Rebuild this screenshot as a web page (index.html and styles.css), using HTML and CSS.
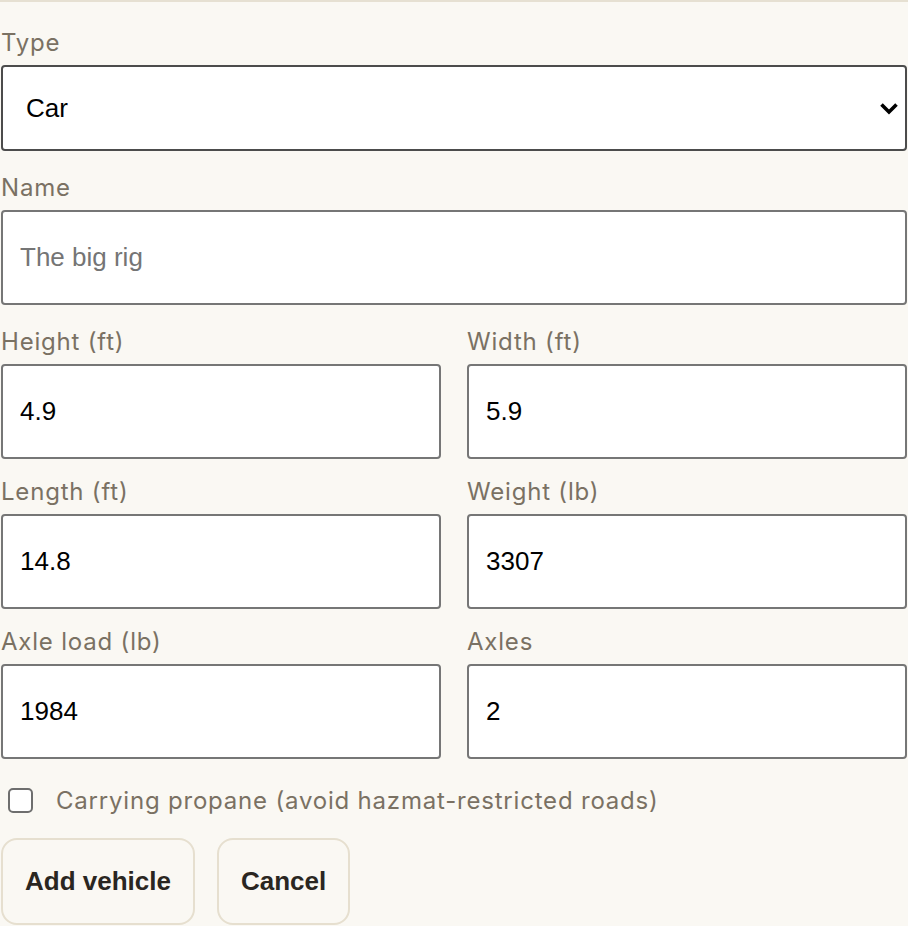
FILE: index.html
```html
<!DOCTYPE html>
<html lang="en">
<head>
    <meta charset="UTF-8">
    <title>Add vehicle</title>
    <link rel="stylesheet" href="styles.css">
</head>
<body>
    <form class="vehicle-form" id="vehicleForm">
        <div class="field">
            <label for="type">Type</label>
            <div class="select-wrap">
                <select id="type">
                    <option>Car</option>
                    <option>Truck</option>
                    <option>Van</option>
                    <option>RV</option>
                </select>
                <svg class="chevron" width="20" height="13" viewBox="0 0 20 13">
                    <path d="M2.5 2.5 L10 10 L17.5 2.5" fill="none" stroke="#000" stroke-width="3.6"/>
                </svg>
            </div>
        </div>
        <div class="field">
            <label for="name">Name</label>
            <input type="text" id="name" placeholder="The big rig">
        </div>
        <div class="dims">
            <div class="field">
                <label for="height">Height (ft)</label>
                <input type="text" id="height" value="4.9">
            </div>
            <div class="field">
                <label for="width">Width (ft)</label>
                <input type="text" id="width" value="5.9">
            </div>
            <div class="field">
                <label for="length">Length (ft)</label>
                <input type="text" id="length" value="14.8">
            </div>
            <div class="field">
                <label for="weight">Weight (lb)</label>
                <input type="text" id="weight" value="3307">
            </div>
            <div class="field">
                <label for="axleload">Axle load (lb)</label>
                <input type="text" id="axleload" value="1984">
            </div>
            <div class="field">
                <label for="axles">Axles</label>
                <input type="text" id="axles" value="2">
            </div>
        </div>
        <label class="check">
            <input type="checkbox" id="propane">
            <span>Carrying propane (avoid hazmat-restricted roads)</span>
        </label>
        <div class="actions">
            <button type="submit">Add vehicle</button>
            <button type="button">Cancel</button>
        </div>
    </form>
</body>
</html>
```

FILE: styles.css
```css
body {
    margin: 0;
    padding: 0;
    background-color: #faf8f3;
    font-family: Inter, "Noto Sans", sans-serif;
}
.vehicle-form {
    border-top: 2px solid #e6e0d2;
    padding: 26px 1px 0 1px;
    display: flex;
    flex-direction: column;
    gap: 22px;
}
.field {
    display: flex;
    flex-direction: column;
    gap: 7px;
    min-width: 0;
}
.field label {
    font-size: 24px;
    line-height: 30px;
    letter-spacing: 0.8px;
    color: #7a7163;
}
.dims {
    display: grid;
    grid-template-columns: 1fr 1fr;
    column-gap: 26px;
    row-gap: 18px;
}
input[type="text"], select {
    box-sizing: border-box;
    width: 100%;
    height: 95px;
    padding: 0 17px;
    border: 2px solid #767676;
    border-radius: 4px;
    background-color: #fff;
    font-family: "Liberation Sans", Arial, sans-serif;
    font-size: 26px;
    color: #000;
}
input::placeholder {
    color: #757575;
}
.select-wrap {
    position: relative;
}
select {
    height: 86px;
    padding: 0 23px;
    border-color: #4c4c4c;
    appearance: none;
    -webkit-appearance: none;
}
.chevron {
    position: absolute;
    right: 8px;
    top: 37px;
    pointer-events: none;
}
.check {
    display: flex;
    align-items: center;
    gap: 23px;
    height: 30px;
    padding-left: 7px;
    margin-top: 4px;
    font-size: 24px;
    letter-spacing: 0.8px;
    color: #7a7163;
}
.check input {
    flex: none;
    width: 25px;
    height: 25px;
    margin: 0;
    appearance: none;
    -webkit-appearance: none;
    border: 2px solid #6e6e6e;
    border-radius: 5px;
    background-color: #fff;
}
.actions {
    display: flex;
    gap: 22px;
    margin-top: 1px;
}
.actions button {
    height: 87px;
    padding: 0 22px;
    border: 2px solid #e6dfcf;
    border-radius: 16px;
    background-color: #faf8f3;
    font-family: "Liberation Sans", Arial, sans-serif;
    font-size: 26px;
    font-weight: bold;
    color: #2a2621;
    cursor: pointer;
}
```
